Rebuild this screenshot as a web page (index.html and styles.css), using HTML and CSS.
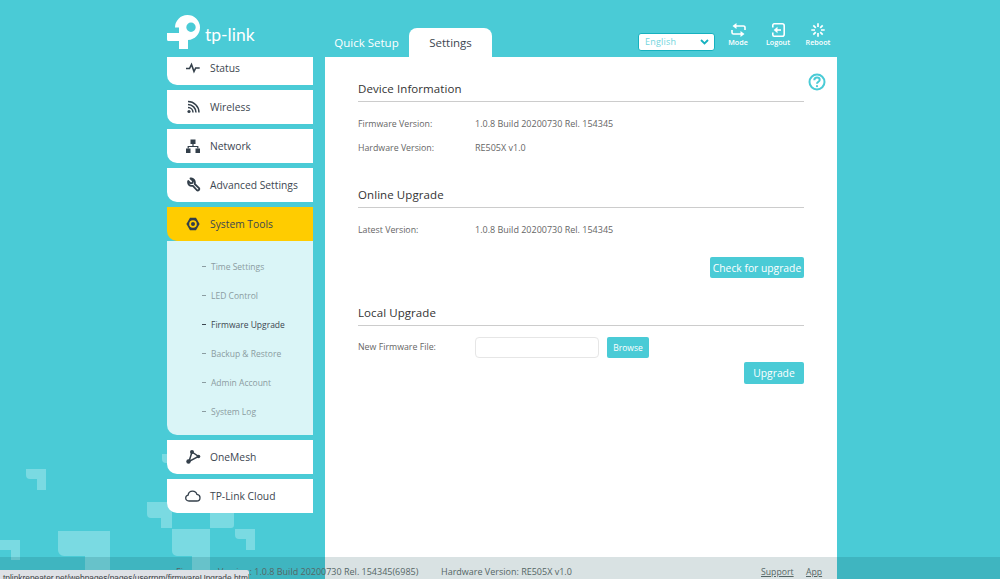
FILE: index.html
```html
<!DOCTYPE html>
<html>
<head>
  <title>TP-Link RE505X</title>
  <meta charset="UTF-8">
  <meta name="viewport" content="width=device-width, initial-scale=1.0">
  <link rel="stylesheet" href="styles.css">
</head>
<body>
  <svg class="bg-shapes" width="1000" height="579" viewBox="0 0 1000 579">
    <g fill="#7adae2">
      <path d="M26 469h20v21h-9v-11h-7a4 4 0 0 1-4-4z"/>
      <path d="M0 540h20v20h-9v-10h-11z"/>
      <path d="M58 531h52v48h-25v-23h-21a6 6 0 0 1-6-6z"/>
      <path d="M147 502h25v26h-11v-10h-10a4 4 0 0 1-4-4z"/>
      <path d="M172 529h38v50h-18v-23h-15a5 5 0 0 1-5-5z"/>
      <path d="M235 529h20v21h-9v-11h-7a4 4 0 0 1-4-4z"/>
      <path d="M162 454h6v9h-2a4 4 0 0 1-4-4z"/>
      <path d="M210 513h24v12a3 3 0 0 1-3 3h-21z"/>
    </g>
  </svg>

  <header class="topbar">
    <div class="logo">
      <svg width="36" height="35" viewBox="0 0 36 35">
        <path fill-rule="evenodd" d="M8 12.500A12.500 12.500 0 1 1 21 25V34H12V26H1.500A1.500 1.500 0 0 1 0 24.500V18H12V12.500zM24 7.500a4.700 4.700 0 1 0 0 9.400 4.700 4.700 0 0 0 0-9.400z" fill="#fff"/>
      </svg>
      <span class="logo-text">tp-link</span>
    </div>
    <nav class="tabs">
      <a class="tab">Quick Setup</a>
      <a class="tab tab-on">Settings</a>
    </nav>
    <div class="lang">
      <span>English</span>
      <svg width="9" height="6" viewBox="0 0 9 6"><path d="M1 1l3.500 3.500 3.500-3.500" fill="none" stroke="#16b1bf" stroke-width="1.800"/></svg>
    </div>
    <div class="tools">
      <a class="tool">
        <svg width="15" height="14" viewBox="0 0 15 14" fill="none" stroke="#fff" stroke-width="1.600">
          <path d="M5 3h7.500a1.500 1.500 0 0 1 1.500 1.500v2.500M10 11h-7.500a1.500 1.500 0 0 1-1.500-1.500v-2.500"/>
          <path d="M5.500 0v6l-4-3zM9.500 8v6l4-3z" fill="#fff" stroke="none"/>
        </svg>
        <span>Mode</span>
      </a>
      <a class="tool">
        <svg width="14" height="14" viewBox="0 0 14 14" fill="none" stroke="#fff" stroke-width="1.600">
          <path d="M1.800 4.500v-2.300a1.400 1.400 0 0 1 1.400-1.400h8a2 2 0 0 1 2 2v8.400a2 2 0 0 1-2 2h-8a1.400 1.400 0 0 1-1.400-1.400v-2.300"/>
          <path d="M10 7h-4"/>
          <path d="M6.500 3.800l-3.800 3.200 3.800 3.200z" fill="#fff" stroke="none"/>
        </svg>
        <span>Logout</span>
      </a>
      <a class="tool">
        <svg width="14" height="14" viewBox="0 0 14 14" fill="none" stroke="#fff" stroke-width="1.700">
          <path d="M7 .3v3.700M7 10v3.700M.3 7h3.700M10 7h3.700M2.300 2.300l2.500 2.500M9.200 9.200l2.500 2.500M2.300 11.700l2.500-2.500M9.200 4.800l2.500-2.500"/>
        </svg>
        <span>Reboot</span>
      </a>
    </div>
  </header>

  <div class="layout">
    <aside class="sidebar">
      <a class="nav-item nav-cut">
        <svg class="nav-icon" width="16" height="16" viewBox="0 0 16 16" fill="none" stroke="#333f4a" stroke-width="1.600"><path d="M1 8.500h3.500l2-4 2.500 7 1.700-3.500h4"/></svg>
        <span>Status</span>
      </a>
      <a class="nav-item">
        <svg class="nav-icon" width="16" height="16" viewBox="0 0 16 16" fill="none" stroke="#333f4a" stroke-width="1.500"><path d="M3 2.500c6 0 11 4.800 11 11M3 5.500c4.400 0 8 3.600 8 8M3 8.500c2.800 0 5 2.200 5 5"/><circle cx="4" cy="12.500" r="1.600" fill="#333f4a" stroke="none"/></svg>
        <span>Wireless</span>
      </a>
      <a class="nav-item">
        <svg class="nav-icon" width="16" height="16" viewBox="0 0 16 16"><path d="M5.500 1.500h5v4.500h-5zM1 10.500h4.500v4.500h-4.500zM10.500 10.500h4.500v4.500h-4.500z" fill="#333f4a"/><path d="M8 6v2.500M3.200 10.500v-2h9.600v2" fill="none" stroke="#333f4a" stroke-width="1.200"/></svg>
        <span>Network</span>
      </a>
      <a class="nav-item">
        <svg class="nav-icon" width="16" height="16" viewBox="0 0 16 16" fill="none" stroke="#333f4a" stroke-width="1.800" stroke-linejoin="round"><path d="M5.500 1.500l2.500 2.300-.4 2-2 .5-2.400-2.300c-.7 2.900 1.400 5.600 4.700 4.800l3.800 4.200c1.500 1.300 3.400-.6 2.100-2.100l-4.100-3.900c.9-3.300-1.500-6-4.200-5.500z"/></svg>
        <span>Advanced Settings</span>
      </a>
      <a class="nav-item nav-on">
        <svg class="nav-icon" width="16" height="16" viewBox="0 0 16 16"><path d="M5 1.800h6l3.600 6.200-3.600 6.200h-6l-3.600-6.200z" fill="#333f4a"/><circle cx="8" cy="8" r="3.800" fill="#fc0"/><circle cx="8" cy="8" r="2" fill="#333f4a"/></svg>
        <span>System Tools</span>
      </a>
      <ul class="subnav">
        <li>Time Settings</li>
        <li>LED Control</li>
        <li class="sub-on">Firmware Upgrade</li>
        <li>Backup &amp; Restore</li>
        <li>Admin Account</li>
        <li>System Log</li>
      </ul>
      <a class="nav-item">
        <svg class="nav-icon" width="16" height="16" viewBox="0 0 16 16"><path d="M7 3l6.500 4.500-9.500 5z" fill="none" stroke="#333f4a" stroke-width="1.500"/><circle cx="7" cy="3" r="2" fill="#333f4a"/><circle cx="13.500" cy="7.500" r="1.800" fill="#333f4a"/><circle cx="3.500" cy="12.500" r="2.200" fill="#333f4a"/></svg>
        <span>OneMesh</span>
      </a>
      <a class="nav-item">
        <svg class="nav-icon" width="16" height="16" viewBox="0 0 16 16"><path d="M4 13c-2 0-3.300-1.300-3.300-3 0-1.500 1-2.600 2.400-2.900.3-2.300 2.200-4 4.500-4 2.100 0 3.700 1.300 4.300 3.300 1.800.2 3.100 1.500 3.100 3.300 0 1.900-1.400 3.300-3.300 3.300z" fill="none" stroke="#333f4a" stroke-width="1.300"/></svg>
        <span>TP-Link Cloud</span>
      </a>
    </aside>

    <main class="panel">
      <section class="block block-first">
        <h2>Device Information</h2>
        <div class="row"><label>Firmware Version:</label><span>1.0.8 Build 20200730 Rel. 154345</span></div>
        <div class="row"><label>Hardware Version:</label><span>RE505X v1.0</span></div>
      </section>
      <section class="block">
        <h2>Online Upgrade</h2>
        <div class="row"><label>Latest Version:</label><span>1.0.8 Build 20200730 Rel. 154345</span></div>
        <div class="actions"><button class="btn btn-check">Check for upgrade</button></div>
      </section>
      <section class="block block-last">
        <h2>Local Upgrade</h2>
        <div class="row row-file">
          <label>New Firmware File:</label>
          <input class="file-input" type="text">
          <button class="btn-browse">Browse</button>
        </div>
        <div class="actions actions-tight"><button class="btn btn-upgrade">Upgrade</button></div>
      </section>
      <a class="help">
        <svg width="18" height="18" viewBox="0 0 18 18" fill="none" stroke="#4acbd6" stroke-width="2">
          <circle cx="9" cy="9" r="7.500"/>
          <path d="M6.300 7.200c0-1.600 1.200-2.600 2.700-2.600s2.700 1 2.700 2.300c0 1.800-2.700 1.900-2.700 3.800"/>
          <circle cx="9" cy="13.200" r="1.100" fill="#4acbd6" stroke="none"/>
        </svg>
      </a>
    </main>
  </div>

  <footer class="footer">
    <span class="foot-fw">Firmware Version: 1.0.8 Build 20200730 Rel. 154345(6985)</span>
    <span class="foot-hw">Hardware Version: RE505X v1.0</span>
    <a class="foot-support">Support</a>
    <a class="foot-app">App</a>
  </footer>

  <div class="status-bubble">tplinkrepeater.net/webpages/pages/userrpm/firmwareUpgrade.html</div>
</body>
</html>
```

FILE: styles.css
```css
* {
  box-sizing: border-box;
}
html, body {
  height: 100%;
}
body {
  position: relative;
  display: flex;
  flex-direction: column;
  height: 579px;
  margin: 0;
  overflow: hidden;
  background: #4acbd6;
  color: #3c4650;
  font-family: "Open Sans", "Noto Sans", sans-serif;
  font-size: 10px;
}
.bg-shapes {
  position: absolute;
  left: 0;
  top: 0;
}
.topbar {
  position: relative;
  display: flex;
  flex: none;
  height: 57px;
  padding-left: 167px;
}
.logo {
  display: flex;
  align-items: flex-start;
  width: 157px;
  padding-top: 15px;
}
.logo-text {
  margin: 9px 0 0 2px;
  color: #fff;
  font-family: "Lato", sans-serif;
  font-size: 17.5px;
  line-height: 22px;
}
.tabs {
  display: flex;
  align-items: flex-end;
  width: 314px;
}
.tab {
  display: flex;
  align-items: center;
  justify-content: center;
  width: 85px;
  height: 29px;
  color: #fff;
  font-size: 11.5px;
}
.tab-on {
  width: 83px;
  border-radius: 8px 8px 0 0;
  background: #fff;
  color: #3c4650;
}
.lang {
  display: flex;
  align-items: center;
  justify-content: space-between;
  width: 77px;
  height: 18px;
  margin-top: 33px;
  padding: 0 5px 1px 6px;
  border: 1px solid #16b1bf;
  border-radius: 3px;
  background: #fff;
  color: #72d5dd;
  font-size: 9px;
  letter-spacing: .2px;
}
.tools {
  display: flex;
  width: 122px;
  margin-left: 3px;
  padding-top: 23px;
}
.tool {
  display: flex;
  flex-direction: column;
  align-items: center;
  width: 40px;
  height: 26px;
  color: #fff;
  font-size: 7.2px;
  font-weight: 600;
  line-height: 11px;
}
.tool svg {
  flex: none;
}
.layout {
  position: relative;
  display: flex;
  flex: 1;
  min-height: 0;
  padding-left: 167px;
}
.sidebar {
  display: flex;
  flex-direction: column;
  width: 146px;
  margin-right: 12px;
}
.nav-item {
  display: flex;
  flex: none;
  align-items: center;
  gap: 9px;
  height: 34px;
  margin-bottom: 5px;
  padding-left: 18px;
  border-bottom-left-radius: 10px;
  background: #fff;
  font-size: 10.3px;
}
.nav-cut {
  height: 28px;
  padding-bottom: 6px;
}
.nav-on {
  margin-bottom: 0;
  background: #fc0;
}
.subnav {
  display: flex;
  flex: none;
  flex-direction: column;
  height: 194px;
  margin: 0 0 5px;
  padding: 10.5px 0 0 35px;
  border-bottom-left-radius: 10px;
  background: #daf5f7;
  list-style: none;
  color: #8b9ca1;
  font-size: 8.5px;
}
.subnav li {
  display: flex;
  align-items: center;
  height: 29px;
}
.subnav li::before {
  content: "";
  width: 4px;
  height: 1px;
  margin-right: 5px;
  background: currentColor;
}
.subnav .sub-on {
  color: #3c4650;
}
.panel {
  position: relative;
  width: 512px;
  padding: 0 33px;
  background: #fff;
}
.block {
  padding-top: 28px;
}
.block-first {
  padding-top: 24px;
}
.block-last {
  padding-top: 27px;
}
.block h2 {
  height: 21px;
  margin: 0 0 9px;
  border-bottom: 1px solid #ccc;
  color: #333;
  font-size: 11.5px;
  font-weight: 400;
  letter-spacing: .08px;
  line-height: 16px;
}
.row {
  display: flex;
  align-items: baseline;
  height: 24px;
  color: #666;
  font-size: 9px;
  line-height: 26px;
}
.row label {
  width: 117px;
  font-size: 8.8px;
}
.actions {
  display: flex;
  justify-content: flex-end;
  margin-top: 16px;
}
.actions-tight {
  margin-top: 4px;
}
.btn, .btn-browse {
  border: 0;
  border-radius: 2px;
  background: #4acbd6;
  color: #fff;
  font-family: inherit;
  white-space: nowrap;
}
.btn {
  height: 21px;
  font-size: 10.3px;
}
.btn-check {
  width: 94px;
  padding: 0;
}
.btn-upgrade {
  width: 60px;
  height: 22px;
}
.row-file {
  align-items: center;
  height: 21px;
  margin-top: 11px;
  line-height: 21px;
}
.file-input {
  width: 124px;
  height: 21px;
  margin-right: 8px;
  border: 1px solid #e6e6e6;
  border-radius: 4px;
}
.btn-browse {
  width: 42px;
  height: 21px;
  padding: 0;
  font-size: 8.5px;
}
.help {
  position: absolute;
  right: 11px;
  top: 16px;
  width: 18px;
  height: 18px;
}
.footer {
  position: absolute;
  left: 0;
  right: 0;
  bottom: 0;
  display: flex;
  align-items: center;
  height: 22px;
  padding-top: 7px;
  background: rgba(0, 60, 70, .15);
  color: #566;
  font-size: 9px;
}
.foot-fw {
  width: 265px;
  margin-left: 176px;
}
.foot-hw {
  width: 320px;
}
.foot-support {
  width: 45px;
  font-size: 8.7px;
  text-decoration: underline;
}
.foot-app {
  font-size: 8.7px;
  text-decoration: underline;
}
.status-bubble {
  position: absolute;
  left: 0;
  bottom: 0;
  width: 249px;
  height: 9px;
  padding: 3px 0 0 3px;
  overflow: hidden;
  border-top-right-radius: 2px;
  background: #dee1e6;
  color: #3c4043;
  font-family: "Liberation Sans", sans-serif;
  font-size: 8.35px;
  line-height: 10px;
  white-space: nowrap;
}
```
